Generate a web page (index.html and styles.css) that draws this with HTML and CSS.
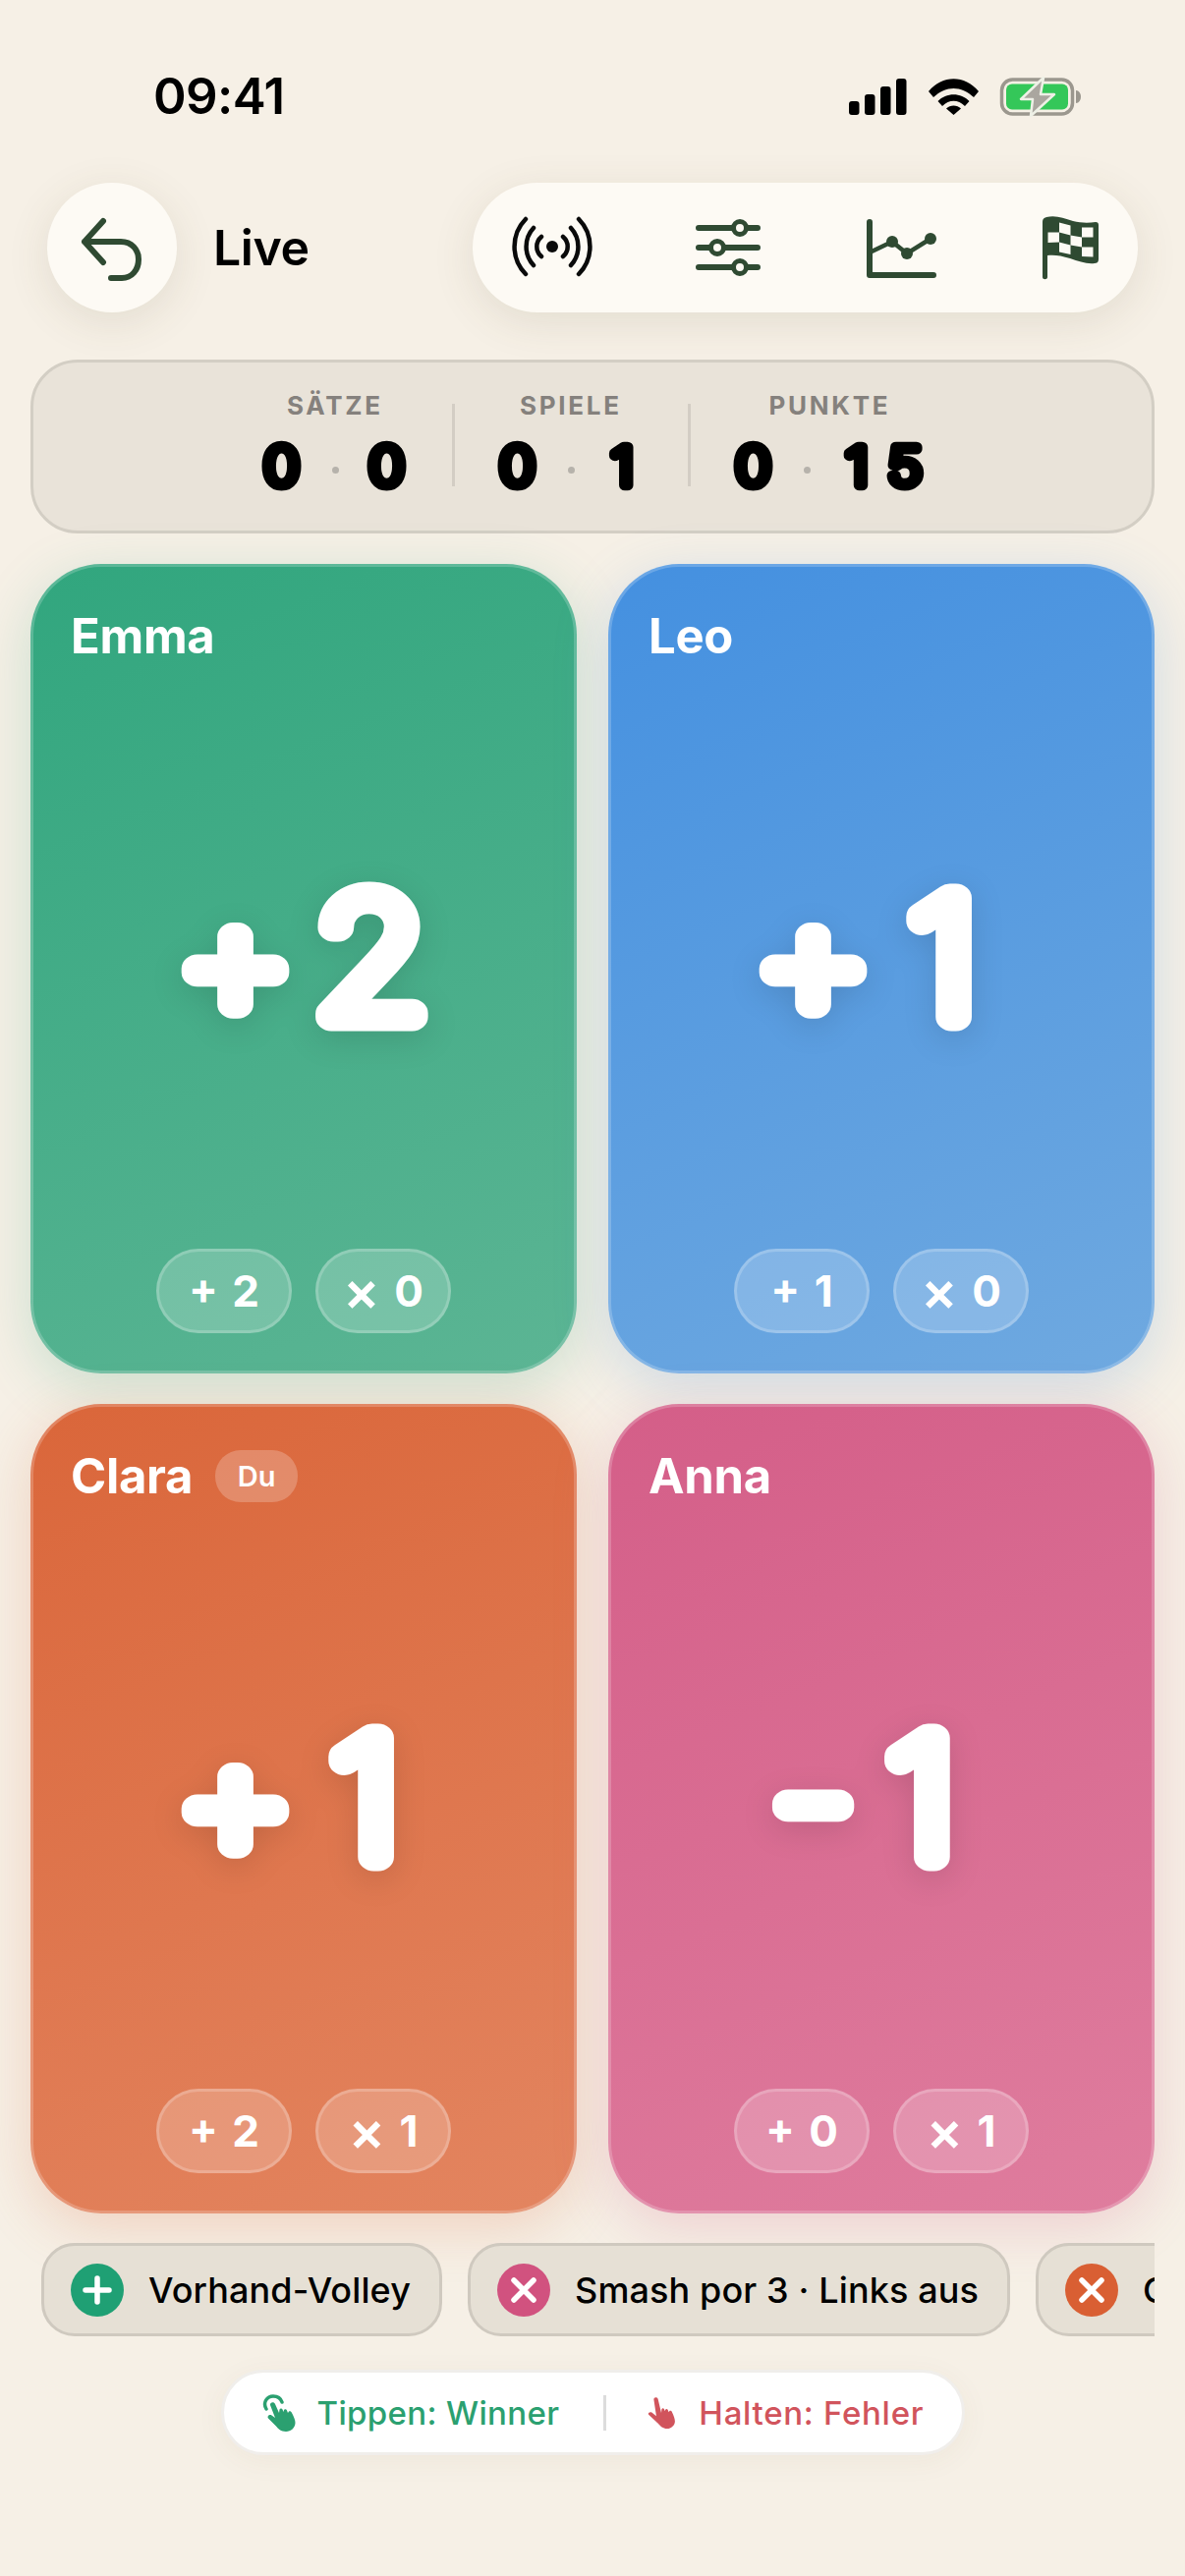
FILE: index.html
```html
<!DOCTYPE html>
<html lang="de">
<head>
<meta charset="utf-8">
<title>Live</title>
<link rel="stylesheet" href="styles.css">
</head>
<body>
<div class="app">
  <div class="status">
    <span class="time">09:41</span>
    <div class="status-icons">
      <svg class="signal" width="59" height="37" viewBox="0 0 59 37"><rect x="0" y="23" width="10.5" height="14" rx="3"/><rect x="16" y="16" width="10.5" height="21" rx="3"/><rect x="32" y="8" width="10.5" height="29" rx="3"/><rect x="48" y="0" width="10.5" height="37" rx="3"/></svg>
      <svg class="wifi" width="51" height="37" viewBox="0 0 51 37"><path d="M0 13C14-4 37-4 51 13L46 19C33 7 18 7 5 19Z"/><path d="M9.500 23C18 14 33 14 41.500 23L37 28C30 21 21 21 14 28Z"/><path d="M18 30.500C22 26.500 29 26.500 33 30.500L25.500 37Z"/></svg>
      <svg class="battery" width="82" height="39" viewBox="0 0 82 39"><rect class="bat-line" x="1.500" y="2" width="72" height="35" rx="11"/><rect class="bat-fill" x="6" y="6.500" width="63" height="26" rx="6"/><path class="bat-nub" d="M77 13C80 13 82 16 82 19.500C82 23 80 26 77 26Z"/><path class="bat-bolt" d="M44 0L21 22H33L31 39L55 17H41Z"/></svg>
    </div>
  </div>

  <header class="topbar">
    <div class="title-wrap">
      <button class="back" aria-label="Zurück">
        <svg width="72" height="72" viewBox="0 0 72 72"><path class="ic-line" d="M27 9L8 30L27 51M8 30H45C56 30 63 38 63 48C63 59 56 67 46 67H35"/></svg>
      </button>
      <span class="title">Live</span>
    </div>
    <nav class="tools">
      <svg class="tool" viewBox="0 0 84 84"><g class="ic-broadcast"><path d="M16 13A40 40 0 0 0 16 69M24 22A28 28 0 0 0 24 60M32 31A13 13 0 0 0 32 51M70 13A40 40 0 0 1 70 69M62 22A28 28 0 0 1 62 60M54 31A13 13 0 0 1 54 51"/></g><circle class="ic-dot-black" cx="43" cy="41" r="6"/></svg>
      <svg class="tool" viewBox="0 0 84 84"><path class="ic-line thin" d="M16 22H76M16 42H76M16 62H76"/><circle class="ic-knob" cx="58" cy="22" r="6.500"/><circle class="ic-knob" cx="35" cy="42" r="6.500"/><circle class="ic-knob" cx="58" cy="62" r="6.500"/></svg>
      <svg class="tool" viewBox="0 0 84 84"><path class="ic-line thin" d="M13 16V70H78"/><path class="ic-line chart" d="M13 47L36 36L51 48L75 33"/><circle class="ic-fill" cx="36" cy="36" r="6"/><circle class="ic-fill" cx="51" cy="48" r="6"/><circle class="ic-fill" cx="75" cy="33" r="6"/></svg>
      <svg class="tool" viewBox="0 0 84 84"><path class="ic-fill" d="M13 17C13 13 14 12 17 11C27 9 34 12 44 15C52 17 60 17 67 16C69 16 70 17 70 19V54C70 57 68 58 66 58C58 59 50 56 41 53C32 50 24 49 18 50V72C18 75 13 75 13 72Z"/><path class="ic-check" d="M30 16.500L41.500 19.500V29.500L30 26.500ZM53 21.500L64.500 21.500V31.500L53 31.500ZM18.500 26.500L30 26.500V36.500L18.500 37ZM41.500 29.500L53 31.500V41.500L41.500 39.500ZM30 36.500L41.500 39.500V49L30 46.500ZM53 41.500L64.500 41.500V51.500L53 51Z"/></svg>
    </nav>
  </header>

  <section class="score">
    <div class="score-group">
      <div class="score-label">SÄTZE</div>
      <div class="score-values">
        <svg class="digit" viewBox="0 0 41 49"><text x="20.500" y="44">0</text></svg>
        <i class="score-dot"></i>
        <svg class="digit" viewBox="0 0 41 49"><text x="20.500" y="44">0</text></svg>
      </div>
    </div>
    <i class="score-divider"></i>
    <div class="score-group">
      <div class="score-label">SPIELE</div>
      <div class="score-values">
        <svg class="digit" viewBox="0 0 41 49"><text x="20.500" y="44">0</text></svg>
        <i class="score-dot"></i>
        <svg class="digit" viewBox="0 0 41 49"><text x="20.500" y="44">1</text></svg>
      </div>
    </div>
    <i class="score-divider"></i>
    <div class="score-group">
      <div class="score-label">PUNKTE</div>
      <div class="score-values">
        <svg class="digit" viewBox="0 0 41 49"><text x="20.500" y="44">0</text></svg>
        <i class="score-dot"></i>
        <svg class="digit wide" viewBox="0 0 88 49"><text x="22 65.400" y="44">15</text></svg>
      </div>
    </div>
  </section>

  <section class="players">
    <article class="card green">
      <div class="card-head"><span class="name">Emma</span></div>
      <div class="big-wrap"><svg class="big" viewBox="0 0 400 200"><text x="138 261.600" y="162">+2</text></svg></div>
      <div class="pills"><span class="pill">+ 2</span><span class="pill"><span class="pill-x">×</span> 0</span></div>
    </article>
    <article class="card blue">
      <div class="card-head"><span class="name">Leo</span></div>
      <div class="big-wrap"><svg class="big" viewBox="0 0 400 200"><text x="138 256" y="162">+1</text></svg></div>
      <div class="pills"><span class="pill">+ 1</span><span class="pill"><span class="pill-x">×</span> 0</span></div>
    </article>
    <article class="card orange">
      <div class="card-head"><span class="name">Clara</span><span class="you">Du</span></div>
      <div class="big-wrap"><svg class="big" viewBox="0 0 400 200"><text x="138 256" y="162">+1</text></svg></div>
      <div class="pills"><span class="pill">+ 2</span><span class="pill"><span class="pill-x">×</span> 1</span></div>
    </article>
    <article class="card pink">
      <div class="card-head"><span class="name">Anna</span></div>
      <div class="big-wrap"><svg class="big" viewBox="0 0 400 200"><text x="138 236" y="162">-1</text></svg></div>
      <div class="pills"><span class="pill">+ 0</span><span class="pill"><span class="pill-x">×</span> 1</span></div>
    </article>
  </section>

  <section class="events">
    <div class="chip"><span class="chip-ic c-green"><svg width="54" height="54" viewBox="0 0 54 54"><path class="ic-white" d="M15 27H39M27 15V39"/></svg></span>Vorhand-Volley</div>
    <div class="chip"><span class="chip-ic c-pink"><svg width="54" height="54" viewBox="0 0 54 54"><path class="ic-white" d="M17 17L37 37M37 17L17 37"/></svg></span>Smash por 3 · Links aus</div>
    <div class="chip"><span class="chip-ic c-orange"><svg width="54" height="54" viewBox="0 0 54 54"><path class="ic-white" d="M17 17L37 37M37 17L17 37"/></svg></span>Cross-Volley</div>
  </section>

  <div class="hint-row">
    <div class="hint">
      <span class="hint-item tap">
        <svg width="34" height="38" viewBox="0 0 34 38"><path class="tap-ring" d="M4 15C0 8 5 2 11 2C16 2 19 5 20 8"/><path class="hand" d="M8 11C7.500 8 12 7 13 10L17 19L17.500 15.500C18 14 20 14 20.500 15.500L21.500 18L22 16C22.500 15 24.500 15 25 16.500L26 19L27 17.500C28 17 29.500 17.500 30 19C32 23 33.500 26 33.500 29C33.500 34 29 38 24 38C19 38 16 35 13.500 32L6 24.500C4.500 22.500 7 20 9.500 21.500L13 24Z"/></svg>
        Tippen: Winner
      </span>
      <i class="hint-divider"></i>
      <span class="hint-item hold">
        <svg width="30" height="32" viewBox="0 0 34 38"><path class="hand" d="M8 3C7.500 0 11.500-1 13 2L17 19L17.500 14.500C18 13 20 13 20.500 14.500L21.500 17L22 15C22.500 14 24.500 14 25 15.500L26 18L27 16.500C28 16 29.500 16.500 30 18C32 22 33.500 26 33.500 29C33.500 34 29 38 24 38C19 38 16 35 13.500 32L2 21.500C0 19.500 3 17 5.500 18.500L11 23Z"/></svg>
        Halten: Fehler
      </span>
    </div>
  </div>
</div>
</body>
</html>
```

FILE: styles.css
```css
* { box-sizing: border-box; }
html, body { margin: 0; height: 2622px; overflow: hidden; }
body {
  background: #f6f0e6;
  color: #000;
  font-family: "Inter", "Liberation Sans", sans-serif;
}
.app { padding: 0 31px; display: flex; flex-direction: column; }

.status {
  display: flex;
  justify-content: space-between;
  align-items: center;
  height: 56px;
  margin-top: 70px;
  padding: 0 75px 0 125px;
}
.time { font-size: 51px; font-weight: 600; letter-spacing: -0.6px; line-height: 56px; }
.status-icons { display: flex; align-items: center; gap: 22px; }
.status-icons svg { display: block; overflow: visible; }
.bat-line { fill: none; stroke: #9b978e; stroke-width: 3.5; }
.bat-fill { fill: #34c759; }
.bat-nub { fill: #9b978e; }
.bat-bolt { fill: #aaa69f; stroke: #eef0e6; stroke-width: 2.5; stroke-linejoin: round; }

.topbar {
  display: flex;
  justify-content: space-between;
  align-items: center;
  margin-top: 60px;
  padding: 0 17px;
}
.title-wrap { display: flex; align-items: center; gap: 37px; }
.back {
  width: 132px;
  height: 132px;
  padding: 0;
  border: 0;
  border-radius: 50%;
  background: #fdfaf4;
  box-shadow: 0 10px 44px rgba(90, 80, 50, 0.12);
  display: flex;
  align-items: center;
  justify-content: center;
}
.title { font-size: 50px; font-weight: 600; letter-spacing: -0.4px; }
.tools {
  width: 677px;
  height: 132px;
  padding: 0 26px 0 38px;
  border-radius: 66px;
  background: #fdfaf4;
  box-shadow: 0 10px 44px rgba(90, 80, 50, 0.12);
  display: flex;
  align-items: center;
  justify-content: space-between;
}
.tool { width: 84px; height: 84px; overflow: visible; display: block; }
.ic-line { fill: none; stroke: #2f4a32; stroke-width: 6; stroke-linecap: round; stroke-linejoin: round; }
.ic-line.thin { stroke-width: 6; }
.ic-line.chart { stroke-width: 4.5; }
.ic-fill { fill: #2f4a32; }
.ic-check { fill: #fdfaf4; }
.ic-knob { fill: #fdfaf4; stroke: #2f4a32; stroke-width: 5; }
.ic-broadcast path { fill: none; stroke: #0a0a0a; stroke-width: 4.5; stroke-linecap: round; }
.ic-dot-black { fill: #0a0a0a; }

.score {
  margin-top: 48px;
  height: 177px;
  border: 3px solid #d3cec4;
  border-radius: 48px;
  background: #e9e3d9;
  display: flex;
  justify-content: center;
  align-items: flex-start;
  padding-top: 31px;
}
.score-group { display: flex; flex-direction: column; align-items: center; }
.score-label {
  font-size: 26px;
  font-weight: 700;
  letter-spacing: 2.7px;
  line-height: 26px;
  color: #85817d;
  margin-right: -2.7px;
}
.score-values { display: flex; align-items: center; margin-top: 24px; }
.digit { width: 41px; height: 49px; overflow: visible; display: block; }
.digit.wide { width: 88px; }
.digit text {
  font-size: 54px;
  font-weight: 200;
  text-anchor: middle;
  fill: #000;
  stroke: #000;
  stroke-width: 10.5;
  stroke-linejoin: round;
  stroke-linecap: round;
  transform-box: view-box;
  transform-origin: 20.5px 0;
  transform: scaleX(1.12);
}
.digit.wide text { transform-origin: 44px 0; }
.score-dot { width: 7px; height: 7px; border-radius: 50%; background: #b6b2ab; margin: 8px 28px 0 31px; display: block; }
.score-divider { width: 3px; height: 84px; background: #d3cdc4; margin: 11px 43px 0 46px; display: block; }

.players {
  margin-top: 31px;
  display: grid;
  grid-template-columns: 1fr 1fr;
  grid-auto-rows: 824px;
  column-gap: 32px;
  row-gap: 31px;
}
.card {
  border: 3px solid rgba(255, 255, 255, 0.2);
  border-radius: 72px;
  background-origin: border-box;
  display: flex;
  flex-direction: column;
  color: #fff;
  padding: 0 0 38px;
}
.green { background-image: linear-gradient(158deg, #31a67e, #5cb594); box-shadow: 0 14px 56px rgba(50, 166, 126, 0.22); }
.blue { background-image: linear-gradient(158deg, #4490e0, #6fa9e0); box-shadow: 0 14px 56px rgba(68, 144, 224, 0.22); }
.orange { background-image: linear-gradient(158deg, #da663a, #e38560); box-shadow: 0 14px 56px rgba(217, 101, 56, 0.22); }
.pink { background-image: linear-gradient(158deg, #d45e88, #df7d9e); box-shadow: 0 14px 56px rgba(210, 91, 132, 0.22); }
.card-head { display: flex; align-items: center; gap: 23px; height: 53px; margin: 44px 0 0 38px; }
.name { font-size: 49px; font-weight: 700; letter-spacing: -0.3px; }
.you {
  width: 84px;
  height: 53px;
  border-radius: 26px;
  background: rgba(255, 255, 255, 0.22);
  font-size: 29px;
  font-weight: 600;
  display: flex;
  align-items: center;
  justify-content: center;
}
.big-wrap { flex: 1; display: flex; align-items: center; justify-content: center; }
.big { width: 400px; height: 200px; overflow: visible; filter: drop-shadow(0 8px 16px rgba(0, 0, 0, 0.12)); }
.big text {
  font-size: 167px;
  font-weight: 100;
  text-anchor: middle;
  fill: #fff;
  stroke: #fff;
  stroke-width: 29;
  stroke-linejoin: round;
  stroke-linecap: round;
  transform-box: view-box;
  transform-origin: 200px 0;
  transform: scaleX(1.12);
}
.pills { display: flex; justify-content: center; gap: 24px; }
.pill {
  height: 86px;
  width: 138px;
  border: 3px solid rgba(255, 255, 255, 0.2);
  border-radius: 43px;
  background: rgba(255, 255, 255, 0.2);
  font-size: 44px;
  font-weight: 700;
  word-spacing: 4px;
  display: flex;
  align-items: center;
  justify-content: center;
  white-space: pre;
}
.pill-x { font-size: 56px; font-weight: 600; line-height: 1; }

.events {
  margin-top: 30px;
  padding-left: 11px;
  display: flex;
  gap: 26px;
  overflow: hidden;
}
.chip {
  flex: none;
  height: 95px;
  padding: 0 29px 0 27px;
  border: 3px solid #cfc9bf;
  border-radius: 34px;
  background: #e6e0d5;
  display: flex;
  align-items: center;
  gap: 25px;
  font-size: 36px;
  font-weight: 500;
  letter-spacing: 0.12px;
}
.chip-ic { width: 54px; height: 54px; border-radius: 50%; display: block; flex: none; }
.chip-ic svg { display: block; }
.c-green { background: #1fa074; }
.c-pink { background: #d1527f; }
.c-orange { background: #d95f33; }
.ic-white { fill: none; stroke: #fff; stroke-width: 5.5; stroke-linecap: round; }

.hint-row { margin-top: 34px; display: flex; justify-content: center; }
.hint {
  width: 757px;
  height: 87px;
  border: 3px solid #f0eeeb;
  border-radius: 44px;
  background: #fff;
  box-shadow: 0 6px 30px rgba(90, 70, 40, 0.05);
  display: flex;
  align-items: center;
  padding-left: 39px;
}
.hint-item { display: flex; align-items: center; font-size: 33px; font-weight: 500; }
.hint-item svg { display: block; flex: none; }
.tap { color: #2ba070; gap: 22px; letter-spacing: 0.35px; }
.hold { color: #d1545c; gap: 23px; letter-spacing: 0.7px; }
.tap .hand { fill: #2ba070; }
.tap-ring { fill: none; stroke: #2ba070; stroke-width: 3.5; stroke-linecap: round; }
.hold .hand { fill: #d1545c; }
.hint-divider { width: 3px; height: 36px; background: #dcdcdc; margin: 0 41px 0 45px; display: block; }
```
